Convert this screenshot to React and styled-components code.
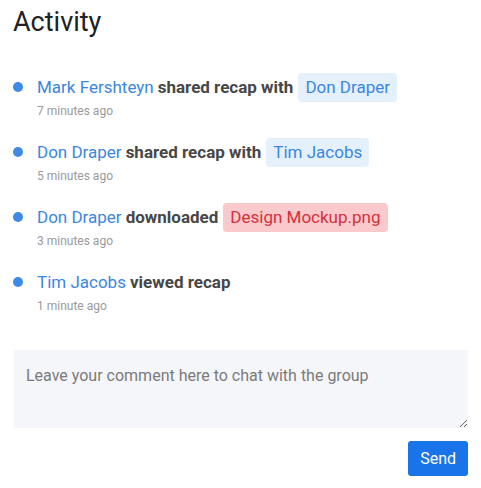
import React, { useState } from 'react';
import styled, { createGlobalStyle } from 'styled-components';

const GlobalStyle = createGlobalStyle`
  body {
    margin: 0;
    background: #ffffff;
    font-family: Roboto, "Liberation Sans", sans-serif;
  }
`;

const Wrapper = styled.div`
  width: 481px;
  box-sizing: border-box;
  padding: 6px 13px 12px 13px;
  display: flex;
  flex-direction: column;
`;

const Title = styled.h1`
  margin: 0 0 34px 0;
  font-size: 27px;
  line-height: 32px;
  font-weight: 400;
  color: #222222;
`;

const Feed = styled.ul`
  list-style: none;
  margin: 0;
  padding: 0;
  display: flex;
  flex-direction: column;
  gap: 18px;
`;

const Item = styled.li`
  display: grid;
  grid-template-columns: 10px 1fr;
  column-gap: 14px;
  row-gap: 1px;
  align-items: center;
`;

const Dot = styled.span`
  width: 10px;
  height: 10px;
  border-radius: 50%;
  background: #3d8be6;
`;

const Line = styled.div`
  display: flex;
  align-items: center;
  gap: 4px;
  height: 30px;
  font-size: 17px;
  white-space: nowrap;
`;

const Name = styled.span`
  color: #3c86df;
`;

const Action = styled.span`
  color: #474747;
  font-weight: 700;
`;

const Tag = styled.span`
  display: inline-flex;
  align-items: center;
  height: 29px;
  margin-left: 1px;
  padding: 0 7px;
  border-radius: 4px;
  background: ${(p) => (p.$tone === 'red' ? '#f9c9cc' : '#e4f1fd')};
  color: ${(p) => (p.$tone === 'red' ? '#d6303d' : '#3c86df')};
`;

const Time = styled.div`
  grid-column: 2;
  font-size: 12px;
  line-height: 16px;
  color: #9a9a9a;
`;

const Comment = styled.textarea`
  margin: 36px 0 0 1px;
  height: 78px;
  box-sizing: border-box;
  padding: 16px 12px;
  border: none;
  border-radius: 0;
  background: #f5f6fa;
  font-family: Roboto, "Liberation Sans", sans-serif;
  font-size: 16px;
  line-height: 20px;
  color: #333333;
  resize: vertical;
  outline: none;

  &::placeholder {
    color: #7b7b7b;
  }
`;

const Actions = styled.div`
  display: flex;
  justify-content: flex-end;
  margin-top: 13px;
`;

const SendButton = styled.button`
  height: 35px;
  padding: 0 12px;
  border: none;
  border-radius: 3px;
  background: #1a74e9;
  color: #ffffff;
  font-family: Roboto, "Liberation Sans", sans-serif;
  font-size: 16px;
  cursor: pointer;
`;

const activity = [
  { id: 1, who: 'Mark Fershteyn', action: 'shared recap with', target: 'Don Draper', tone: 'blue', time: '7 minutes ago' },
  { id: 2, who: 'Don Draper', action: 'shared recap with', target: 'Tim Jacobs', tone: 'blue', time: '5 minutes ago' },
  { id: 3, who: 'Don Draper', action: 'downloaded', target: 'Design Mockup.png', tone: 'red', time: '3 minutes ago' },
  { id: 4, who: 'Tim Jacobs', action: 'viewed recap', time: '1 minute ago' },
];

function App() {
  const [comment, setComment] = useState('');

  return (
    <>
      <GlobalStyle />
      <Wrapper>
        <Title>Activity</Title>
        <Feed>
          {activity.map((item) => (
            <Item key={item.id}>
              <Dot />
              <Line>
                <Name>{item.who}</Name>
                <Action>{item.action}</Action>
                {item.target && <Tag $tone={item.tone}>{item.target}</Tag>}
              </Line>
              <Time>{item.time}</Time>
            </Item>
          ))}
        </Feed>
        <Comment
          placeholder="Leave your comment here to chat with the group"
          value={comment}
          onChange={(e) => setComment(e.target.value)}
        />
        <Actions>
          <SendButton>Send</SendButton>
        </Actions>
      </Wrapper>
    </>
  );
}

export default App;
